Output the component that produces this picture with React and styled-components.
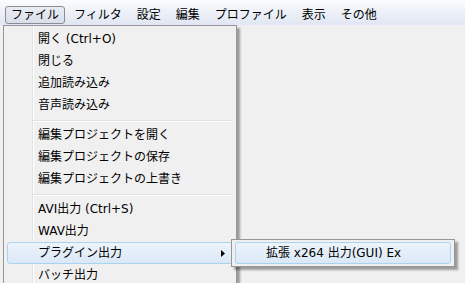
import React from "react";
import styled, { createGlobalStyle } from "styled-components";

const Global = createGlobalStyle`
  html, body { margin: 0; padding: 0; background: #f0f0f0; }
  body { font-family: "DejaVu Sans", "Noto Sans CJK JP", sans-serif; font-size: 12px; color: #000; }
`;

const Window = styled.div`
  position: relative;
  width: 465px;
  height: 283px;
  overflow: hidden;
  background: #f0f0f0;
`;

const MenuBar = styled.div`
  display: flex;
  align-items: flex-end;
  gap: 3px;
  height: 25px;
  box-sizing: border-box;
  padding: 0 0 1px 5px;
  background: linear-gradient(#fbfcfe 0%, #eef1f8 45%, #e0e6f2 100%);
`;

const BarItem = styled.div`
  display: flex;
  align-items: center;
  height: 18px;
  box-sizing: border-box;
  padding: 0 5px;
  border: 1px solid ${(p) => (p.$open ? "#8b8d92" : "transparent")};
  border-radius: 3px;
  background: ${(p) => (p.$open ? "linear-gradient(#e9ecf3, #d9dfea)" : "transparent")};
  white-space: nowrap;
  line-height: 16px;
`;

const gutter = `linear-gradient(to right, #f0f0f0 28px, #e2e3e3 28px, #e2e3e3 29px, #ffffff 29px, #ffffff 30px, #f0f0f0 30px)`;

const Menu = styled.div`
  position: absolute;
  left: ${(p) => p.$x}px;
  top: ${(p) => p.$y}px;
  width: ${(p) => p.$w}px;
  box-sizing: border-box;
  border: 1px solid #979797;
  padding: 2px 3px;
  background: ${gutter};
  background-color: #f0f0f0;
  box-shadow: 3px 3px 2px rgba(0, 0, 0, 0.35);
  display: flex;
  flex-direction: column;
`;

const Item = styled.div`
  display: flex;
  align-items: center;
  height: 22px;
  box-sizing: border-box;
  padding: 0 7px 0 30px;
  border: 1px solid ${(p) => (p.$hot ? "#aad3ef" : "transparent")};
  border-radius: 3px;
  background: ${(p) => (p.$hot ? "linear-gradient(#edf4fc, #dae8f6)" : "transparent")};
  white-space: nowrap;
  line-height: 20px;
`;

const Label = styled.span`
  flex: 1;
`;

const Separator = styled.div`
  height: 8px;
  margin-left: 26px;
  box-sizing: border-box;
  padding-top: 4px;
  &::after {
    content: "";
    display: block;
    height: 1px;
    background: #e0e0e0;
    border-bottom: 1px solid #ffffff;
  }
`;

const Arrow = () => (
  <svg width="4" height="7" viewBox="0 0 4 7">
    <polygon points="0,0 4,3.5 0,7" fill="#000" />
  </svg>
);

const barItems = ["ファイル", "フィルタ", "設定", "編集", "プロファイル", "表示", "その他"];

const fileMenu = [
  "開く (Ctrl+O)",
  "閉じる",
  "追加読み込み",
  "音声読み込み",
  "-",
  "編集プロジェクトを開く",
  "編集プロジェクトの保存",
  "編集プロジェクトの上書き",
  "-",
  "AVI出力 (Ctrl+S)",
  "WAV出力",
  ">プラグイン出力",
  "バッチ出力",
];

export default function App() {
  return (
    <Window>
      <Global />
      <MenuBar>
        {barItems.map((t, i) => (
          <BarItem key={t} $open={i === 0}>
            {t}
          </BarItem>
        ))}
      </MenuBar>
      <Menu $x={3} $y={25} $w={234}>
        {fileMenu.map((t, i) =>
          t === "-" ? (
            <Separator key={i} />
          ) : t.startsWith(">") ? (
            <Item key={i} $hot>
              <Label>{t.slice(1)}</Label>
              <Arrow />
            </Item>
          ) : (
            <Item key={i}>
              <Label>{t}</Label>
            </Item>
          )
        )}
      </Menu>
      <Menu $x={231} $y={239} $w={224}>
        <Item $hot>
          <Label>拡張 x264 出力(GUI) Ex</Label>
        </Item>
      </Menu>
    </Window>
  );
}
